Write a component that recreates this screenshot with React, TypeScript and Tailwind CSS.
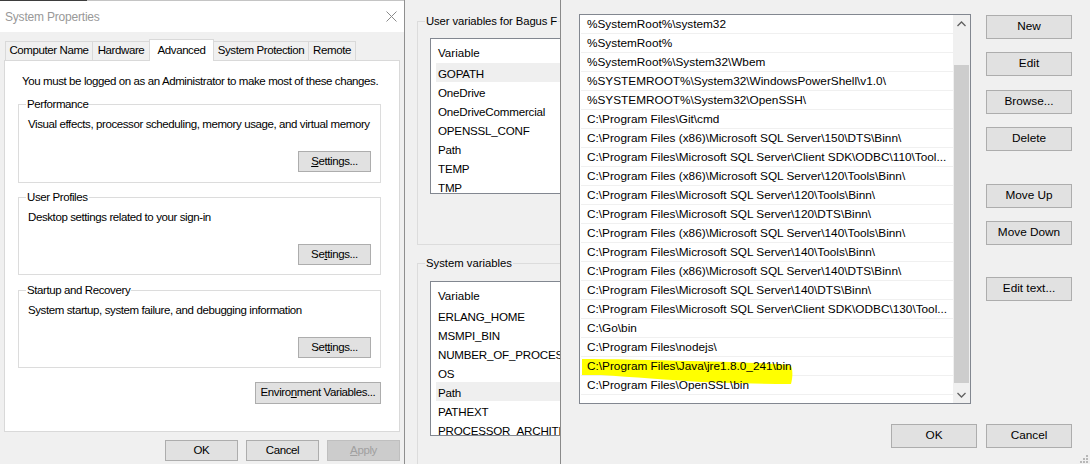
import React from 'react';

const EDIT_ROWS = [
  '%SystemRoot%\\system32',
  '%SystemRoot%',
  '%SystemRoot%\\System32\\Wbem',
  '%SYSTEMROOT%\\System32\\WindowsPowerShell\\v1.0\\',
  '%SYSTEMROOT%\\System32\\OpenSSH\\',
  'C:\\Program Files\\Git\\cmd',
  'C:\\Program Files (x86)\\Microsoft SQL Server\\150\\DTS\\Binn\\',
  'C:\\Program Files\\Microsoft SQL Server\\Client SDK\\ODBC\\110\\Tool...',
  'C:\\Program Files (x86)\\Microsoft SQL Server\\120\\Tools\\Binn\\',
  'C:\\Program Files\\Microsoft SQL Server\\120\\Tools\\Binn\\',
  'C:\\Program Files\\Microsoft SQL Server\\120\\DTS\\Binn\\',
  'C:\\Program Files (x86)\\Microsoft SQL Server\\140\\Tools\\Binn\\',
  'C:\\Program Files\\Microsoft SQL Server\\140\\Tools\\Binn\\',
  'C:\\Program Files (x86)\\Microsoft SQL Server\\140\\DTS\\Binn\\',
  'C:\\Program Files\\Microsoft SQL Server\\140\\DTS\\Binn\\',
  'C:\\Program Files\\Microsoft SQL Server\\Client SDK\\ODBC\\130\\Tool...',
  'C:\\Go\\bin',
  'C:\\Program Files\\nodejs\\',
  'C:\\Program Files\\Java\\jre1.8.0_241\\bin',
  'C:\\Program Files\\OpenSSL\\bin',
];

const USER_VARS = ['GOPATH', 'OneDrive', 'OneDriveCommercial', 'OPENSSL_CONF', 'Path', 'TEMP', 'TMP'];
const SYSTEM_VARS = ['ERLANG_HOME', 'MSMPI_BIN', 'NUMBER_OF_PROCESSORS', 'OS', 'Path', 'PATHEXT', 'PROCESSOR_ARCHITECTURE'];

const Btn: React.FC<{ className?: string; children: React.ReactNode }> = ({ className = '', children }) => (
  <div className={`flex items-center justify-center whitespace-nowrap border border-[#adadad] bg-[#e1e1e1] leading-none text-black ${className}`}>
    {children}
  </div>
);

const Group: React.FC<{ label: string; desc: string; mnemonic: React.ReactNode; className?: string }> = ({ label, desc, mnemonic, className = '' }) => (
  <div className={`ml-[13px] flex w-[363px] flex-col border border-[#dcdcdc] ${className}`}>
    <div className="-mt-[9px] ml-[7px] w-fit whitespace-nowrap bg-white px-[1px] leading-[16px]">{label}</div>
    <div className="ml-[9px] mt-[4px] whitespace-nowrap leading-[16px]">{desc}</div>
    <Btn className="mr-[9px] mt-[19px] h-[21px] w-[73px] self-end">{mnemonic}</Btn>
  </div>
);

const Tab: React.FC<{ w: string; children: React.ReactNode }> = ({ w, children }) => (
  <div className={`-ml-px flex h-[19px] items-center justify-center whitespace-nowrap border border-b-0 border-[#d9d9d9] bg-[#f0f0f0] first:ml-0 ${w}`}>
    {children}
  </div>
);

const SystemProperties = () => (
  <div className="flex h-[464px] w-[405px] shrink-0 flex-col border-r border-[#8f8f8f] bg-[#f0f0f0] text-[11.5px] tracking-[-0.4px]">
    <div className="flex h-px bg-[#c4c4c4]">
      <div className="h-px w-[87px] bg-[#3d3d3d]" />
    </div>
    <div className="flex h-[31px] items-center justify-between bg-white pl-[5px] pr-[6px]">
      <span className="text-[12px] tracking-[-0.2px] text-[#999999]">System Properties</span>
      <svg width="11" height="11" viewBox="0 0 11 11" className="mr-[1px]">
        <path d="M0.5 0.5 L10.5 10.5 M10.5 0.5 L0.5 10.5" stroke="#8a8a8a" strokeWidth="1" fill="none" />
      </svg>
    </div>

    <div className="ml-[5px] mt-[7px] flex h-[21px] items-end">
      <Tab w="w-[88px]">Computer Name</Tab>
      <Tab w="w-[58px]">Hardware</Tab>
      <div className="relative z-10 -mb-px -ml-px flex h-[22px] w-[65px] items-start justify-center whitespace-nowrap border border-b-0 border-[#d9d9d9] bg-white pt-[2px]">Advanced</div>
      <Tab w="w-[96px]">System Protection</Tab>
      <Tab w="w-[48px]">Remote</Tab>
    </div>

    <div className="ml-[4px] flex h-[372px] w-[396px] flex-col border border-[#d9d9d9] bg-white text-black">
      <div className="ml-[17px] mt-[12px] whitespace-nowrap leading-[16px]">You must be logged on as an Administrator to make most of these changes.</div>
      <Group
        className="mt-[15px] h-[79px]"
        label="Performance"
        desc="Visual effects, processor scheduling, memory usage, and virtual memory"
        mnemonic={<span><span className="underline">S</span>ettings...</span>}
      />
      <Group
        className="mt-[14px] h-[78px]"
        label="User Profiles"
        desc="Desktop settings related to your sign-in"
        mnemonic={<span>Se<span className="underline">t</span>tings...</span>}
      />
      <Group
        className="mt-[15px] h-[78px]"
        label="Startup and Recovery"
        desc="System startup, system failure, and debugging information"
        mnemonic={<span>Set<span className="underline">t</span>ings...</span>}
      />
      <Btn className="mr-[18px] mt-[14px] h-[22px] w-[126px] self-end">
        <span>Enviro<span className="underline">n</span>ment Variables...</span>
      </Btn>
    </div>

    <div className="mr-[4px] mt-[8px] flex justify-end gap-[8px]">
      <Btn className="h-[21px] w-[73px]">OK</Btn>
      <Btn className="h-[21px] w-[73px]">Cancel</Btn>
      <Btn className="h-[21px] w-[73px] !border-[#bfbfbf] !bg-[#cccccc] !text-[#a0a0a0]">
        <span><span className="underline">A</span>pply</span>
      </Btn>
    </div>
  </div>
);

const VarList: React.FC<{ items: string[]; selected: number; className?: string }> = ({ items, selected, className = '' }) => (
  <div className={`ml-[12px] w-[300px] overflow-hidden border border-[#828790] bg-white text-[11.6px] ${className}`}>
    <div className="flex h-[24px] items-center pl-[7px] pt-[3px]">Variable</div>
    {items.map((v, i) => (
      <div key={v + i} className={`ml-[5px] flex h-[19px] items-center whitespace-nowrap pl-[2px] pt-[2px] tracking-[-0.2px] ${i === selected ? 'bg-[#efefef]' : ''}`}>
        {v}
      </div>
    ))}
  </div>
);

const EnvironmentVariables = () => (
  <div className="h-[464px] w-[156px] shrink-0 overflow-hidden border-r border-[#8a8a8a] bg-[#f0f0f0] text-[11.3px] text-black">
    <div className="ml-[12px] mt-[21px] h-[224px] w-[420px] border border-[#dcdcdc]">
      <div className="-mt-[9px] ml-[7px] w-fit whitespace-nowrap bg-[#f0f0f0] px-[1px] leading-[16px] tracking-[-0.1px]">User variables for Bagus F</div>
      <VarList className="mt-[9px] h-[156px]" items={USER_VARS} selected={0} />
    </div>
    <div className="ml-[12px] mt-[18px] h-[260px] w-[420px] border border-[#dcdcdc]">
      <div className="-mt-[9px] ml-[7px] w-fit whitespace-nowrap bg-[#f0f0f0] px-[1px] leading-[16px]">System variables</div>
      <VarList className="mt-[10px] h-[155px]" items={SYSTEM_VARS} selected={4} />
    </div>
  </div>
);

// hand-drawn highlighter stroke over the Java row
const Marker = () => (
  <svg className="pointer-events-none absolute left-0 top-0" width="215" height="30" viewBox="0 0 215 30">
    <path
      d="M1 2 C30 2 70 3 110 4 C150 5 185 6 209 8 C212 10 212 20 210 27 C180 27 150 26 120 25 C90 23 50 20 20 18 C10 18 4 18 1 18 Z"
      fill="#ffff00"
    />
  </svg>
);

const EditEnvironment = () => (
  <div className="relative flex h-[464px] flex-1 flex-col bg-[#f0f0f0] text-[11.8px] text-black">
    <div className="flex">
      <div className="ml-[18px] mt-[14px] flex h-[390px] w-[392px] border border-[#828790] bg-white">
        <div className="flex w-[373px] flex-col">
          {EDIT_ROWS.map((r, i) => (
            <div key={r + i} className="relative ml-px flex h-[19px] w-[372px] items-center whitespace-nowrap border-b border-[#f0f0f0] pl-[6px] pt-[2px]">
              {i === 18 && <Marker />}
              <span className="relative">{r}</span>
            </div>
          ))}
        </div>
        <div className="flex w-[17px] flex-col bg-[#f0f0f0]">
          <div className="flex h-[17px] items-center justify-center">
            <svg width="9" height="6" viewBox="0 0 9 6">
              <path d="M0.5 5 L4.5 1 L8.5 5" stroke="#606060" strokeWidth="1.3" fill="none" />
            </svg>
          </div>
          <div className="mx-[1px] mt-[33px] h-[318px] bg-[#cdcdcd]" />
          <div className="mt-auto flex h-[17px] items-center justify-center">
            <svg width="9" height="6" viewBox="0 0 9 6">
              <path d="M0.5 1 L4.5 5 L8.5 1" stroke="#606060" strokeWidth="1.3" fill="none" />
            </svg>
          </div>
        </div>
      </div>
      <div className="ml-[15px] flex w-[86px] flex-col">
        <Btn className="mt-[15px] h-[24px]">New</Btn>
        <Btn className="mt-[13px] h-[24px]">Edit</Btn>
        <Btn className="mt-[14px] h-[24px]">Browse...</Btn>
        <Btn className="mt-[13px] h-[24px]">Delete</Btn>
        <Btn className="mt-[33px] h-[24px]">Move Up</Btn>
        <Btn className="mt-[13px] h-[24px]">Move Down</Btn>
        <Btn className="mt-[32px] h-[24px]">Edit text...</Btn>
      </div>
    </div>
    <div className="mr-[18px] mt-[20px] flex justify-end gap-[9px]">
      <Btn className="h-[24px] w-[86px]">OK</Btn>
      <Btn className="h-[24px] w-[86px]">Cancel</Btn>
    </div>
    <svg className="absolute bottom-[1px] right-[2px]" width="9" height="9" viewBox="0 0 9 9">
      <g fill="#b8b8b8">
        <rect x="7" y="1" width="2" height="2" />
        <rect x="4" y="4" width="2" height="2" />
        <rect x="7" y="4" width="2" height="2" />
        <rect x="1" y="7" width="2" height="2" />
        <rect x="4" y="7" width="2" height="2" />
        <rect x="7" y="7" width="2" height="2" />
      </g>
    </svg>
  </div>
);

const App: React.FC = () => {
  return (
    <div className="flex h-[464px] w-[1090px] overflow-hidden font-['Liberation_Sans',Arial,sans-serif]">
      <SystemProperties />
      <EnvironmentVariables />
      <EditEnvironment />
    </div>
  );
};

export default App;
